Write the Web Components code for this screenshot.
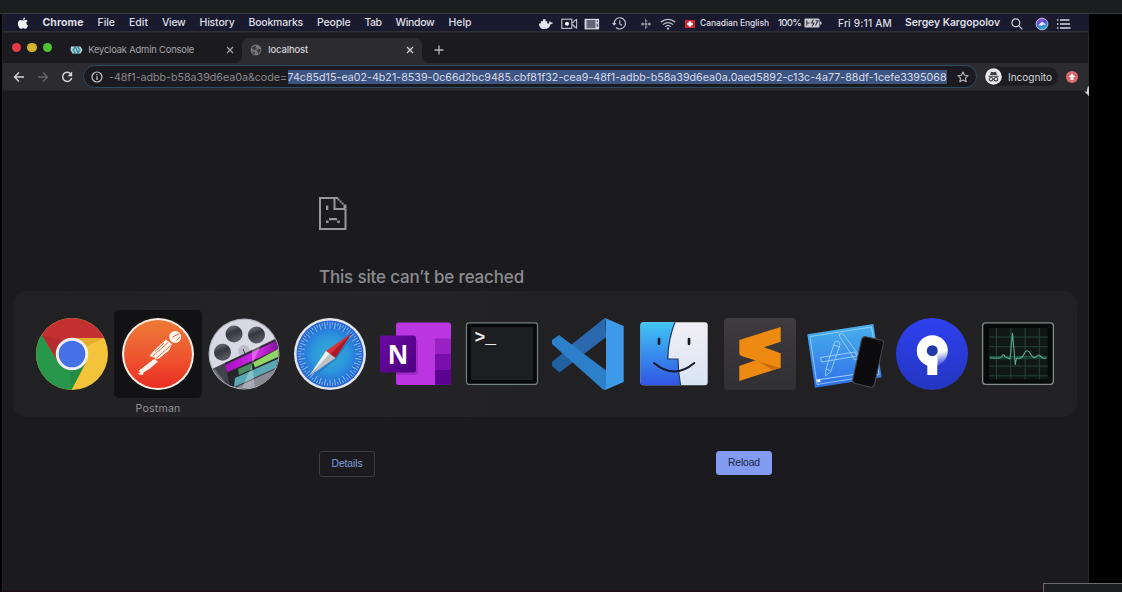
<!DOCTYPE html>
<html lang="en">
<head>
<meta charset="utf-8">
<title>localhost</title>
<style>
html,body{margin:0;height:100%;background:#000;overflow:hidden}
body{font-family:Inter,"Liberation Sans",sans-serif}
</style>
</head>
<body>
<desk-top></desk-top>
<script>
const define=(name,html,ready)=>{
  const t=document.createElement('template');t.innerHTML=html;
  customElements.define(name,class extends HTMLElement{
    connectedCallback(){
      if(this.shadowRoot)return;
      this.attachShadow({mode:'open'}).append(t.content.cloneNode(true));
      if(ready)ready(this,this.shadowRoot);
    }
  });
};

/* A one-line label; "w" is the advance width that its tracking is set to fill. */
define('ui-label',`<style>
:host{display:inline-block;white-space:nowrap;flex:none;line-height:1.2}
</style><span><slot></slot></span>`,(el,root)=>{
  const w=+el.getAttribute('w'),s=root.querySelector('span');
  if(!w)return;
  const n=el.textContent.length,nat=s.getBoundingClientRect().width;
  s.style.letterSpacing=((w-nat)/n)+'px';
  el.style.width=w+'px';
});

const glyphs={
apple:['0 0 12 13','<path fill="#f2f2f5" d="M8.2.4c.1 1.2-1 2.5-2.2 2.5C5.800 1.700 7 .5 8.200.4zM6.200 3.500c.5 0 1.200-.6 2.300-.6.9 0 1.700.4 2.200 1.100-1.900 1.200-1.600 3.700.4 4.500-.5 1.400-1.500 3.200-2.700 3.200-.9 0-1.100-.5-2.200-.5s-1.400.5-2.200.5C2.500 11.700.9 8.900.9 6.700c0-2.300 1.400-3.600 2.900-3.600 1.100 0 1.800.4 2.400.4z"/>'],
docker:['0 0 14 12','<path fill="#e4e4ea" d="M0 5.500h9.500c.7 0 1-.5.6-1.600l.8-.9 1 1.400 1.900.1-.4 1.200-1.800.5C10.700 9.500 8.500 11 5.200 11 2 11 0 9 0 5.500zM1.800 3.200h6.400v2.500H1.800zM4 1.200h2.600v2.200H4z"/>'],
cam:['0 0 17 12','<g fill="none" stroke="#c3c3cb" stroke-width="1.1"><rect x=".8" y="1.200" width="10" height="9.200"/><path d="M11 5l2-1.200V3l2.600-1.500v8.600L13 8.600v-.9L11 6.600"/></g><circle cx="6" cy="5.800" r="2" fill="#fff"/>'],
screen:['0 0 16 12','<rect x=".6" y=".8" width="14.500" height="10.600" fill="#d8d8df"/><rect x="2.500" y="2" width="9" height="8.200" fill="#62657b"/><path stroke="#33344a" d="M13.300 2.500v1.500M13.300 5.500v3.500"/>'],
clock:['0 0 15 13','<g fill="none" stroke="#c0c0c8" stroke-width="1.200"><path d="M2.200 6.500A5.600 5.600 0 1 1 4 10.500M7.800 3.300v3.600l2.300 1.300"/></g><path fill="#c8c8d0" d="M0 6h4.400L2.200 8.800z"/>'],
dots:['0 0 10 12','<path d="M4.500 1v10" stroke="#5c5c6a"/><g fill="#9494a0"><path d="M4 1l3 2.500H4zM4 11l3-2.500H4z"/><circle cx="1.700" cy="6" r="1.500"/><circle cx="5" cy="6" r="1.500"/><circle cx="8.300" cy="6" r="1.500"/></g>'],
wifi:['0 0 16 12','<g fill="none" stroke="#bcbcc6" stroke-width="1.300"><path d="M.8 4.300a10.400 10.400 0 0 1 14.400 0M3 6.600a7.200 7.200 0 0 1 10 0M5.200 8.700a4.100 4.100 0 0 1 5.600 0"/></g><circle cx="8" cy="10.600" r="1.100" fill="#d6d6dc"/>'],
flag:['0 0 10 8','<path fill="#d81f2a" d="M0 0h10v8H0z"/><path fill="#fff" d="M3.800 1.200h2.400v1.600h1.600v2.400H6.200v1.600H3.800V5.200H2.200V2.800h1.600z"/>'],
battery:['0 0 18 10','<rect x=".5" y=".5" width="15" height="9" rx="1" fill="#c9c9d0"/><path fill="#c9c9d0" d="M16 3.200q1.700.4 1.700 1.800T16 6.800z"/><path fill="none" stroke="#34344a" stroke-width="1.100" d="M2.800 2.500v5M2.800 5h2.700M9.500 1.500L7.500 5h2.500L8 8.500M11.500 2.700H14L11.500 7.500"/>'],
search:['0 0 12 12','<g fill="none" stroke="#d3d3da" stroke-width="1.200"><circle cx="4.800" cy="4.800" r="3.900"/><path d="M7.700 7.700L11.300 11.300"/></g>'],
siri:['0 0 14 14','<defs><linearGradient id="a" x2=".3" y2="1"><stop stop-color="#d34ee0"/><stop offset=".5" stop-color="#4a51d8"/><stop offset="1" stop-color="#28b7c7"/></linearGradient></defs><circle cx="7" cy="7" r="5.900" fill="url(#a)" stroke="#b8b5d0" stroke-width="1"/><path d="M3 8.500Q5 6 7 4.800 9.500 5.500 11 8q-3-1-4 .7-2-.8-4-.2z" fill="#e5e3ff"/>'],
list:['0 0 14 10','<path stroke="#d8d8df" stroke-width="1.400" d="M0 1h1.500M3 1h9.500M0 5h1.500M3 5h10M0 9h1.500M3 9h10.500"/>'],
keycloak:['0 0 13 12','<path fill="#c9ced2" d="M1 2.500h9.500L12.500 6l-2 3.500H2.500L.5 6z"/><path fill="none" stroke="#2a9fbd" stroke-width="1.700" d="M5.500 2.500L3.200 6l2.300 3.500M7.500 2.500L9.800 6 7.500 9.500"/><path stroke="#1c677d" d="M6 3.500L7.500 8.500"/>'],
globe:['0 0 12 12','<circle cx="6" cy="6" r="5.400" fill="#77777b"/><path fill="#3c3c40" d="M2 3.500q2-2 4.500-1.800L5.500 3.500 6.800 4.500 4.500 6.200 3 5.500zM7 5.500l3.500-.5q.5 2.500-1.200 4L8 10 7.700 7.500 6.200 7zM2 7.500l2.500.5.5 2.400Q3 10 2 7.500z"/>'],
close:['0 0 8 8','<path stroke="currentColor" stroke-width="1.200" d="M1 1l6 6M7 1L1 7"/>'],
plus:['0 0 10 10','<path stroke="#b4b4b8" stroke-width="1.300" d="M5 .5v9M.5 5h9"/>'],
back:['0 0 12 12','<path fill="none" stroke="currentColor" stroke-width="1.400" d="M11 6H1.600M6 1.500L1.500 6 6 10.500"/>'],
fwd:['0 0 12 12','<path fill="none" stroke="currentColor" stroke-width="1.400" d="M1 6h9.400M6 1.500L10.500 6 6 10.500"/>'],
reload:['0 0 12 12','<path fill="none" stroke="#d5d5d9" stroke-width="1.500" d="M10 3.200A4.600 4.600 0 1 0 10.700 7"/><path fill="#d5d5d9" d="M11.200.6v4.700H6.500z"/>'],
info:['0 0 12 12','<circle cx="6" cy="6" r="5" fill="none" stroke="#c8c8cc" stroke-width="1.200"/><path stroke="#c8c8cc" stroke-width="1.300" d="M6 5.300V9M6 3v1.300"/>'],
star:['0 0 12 12','<path fill="none" stroke="#b9b9bd" stroke-width="1.100" stroke-linejoin="round" d="M6 1l1.500 3.300 3.600.4-2.700 2.400.8 3.600L6 8.900l-3.200 1.800.8-3.600L.9 4.700l3.600-.4z"/>'],
incog:['0 0 17 17','<circle cx="8.500" cy="8.500" r="8.300" fill="#e9e9ed"/><path fill="#3c3c40" d="M6 3.700l2.500.5 2.500-.5 1 3.300H5zM3.300 7.700h10.400v1H3.300z"/><g fill="none" stroke="#3c3c40" stroke-width="1.100"><circle cx="6" cy="11.200" r="1.700"/><circle cx="11" cy="11.200" r="1.700"/><path d="M7.700 11h1.600"/></g>'],
update:['0 0 12 12','<circle cx="6" cy="6" r="6" fill="#dc6a6c"/><path fill="#fff" d="M6 2.700L9.300 6H7.500v3h-3V6H2.700z"/>'],
sad:['0 0 28 33','<g fill="none" stroke="#98989c" stroke-width="2"><path d="M19 1H1v31H26.500V11.500M15.500 1v11h10.500"/></g><path fill="#98989c" d="M18.500 1.500h2v2h-2zM20.500 3.500h2v2h-2zM22.500 5.500h2v2h-2zM24.500 7.500h3v4h-3zM7 8.500h2.300v4.600H7zM10 21h8v2.200h-8zM7 23.500h2.600V26H7zM18.200 23.500h2.600V26h-2.600z"/>']
};
define('ui-glyph',`<style>:host{display:block;flex:none}svg{display:block;width:100%;height:100%}</style>`,(el,root)=>{
  const [vb,body]=glyphs[el.getAttribute('name')];
  const [, ,w,h]=vb.split(' ');
  el.style.width=w+'px';el.style.height=h+'px';
  root.innerHTML+=`<svg viewBox="${vb}">${body}</svg>`;
});

let ticks='';
for(let i=0;i<72;i++)ticks+=`<path transform="rotate(${i*5})" d="M0-32V${i%2?-29:-25.5}"/>`;
let grid='';
for(let x=-21.500;x<29;x+=14.300)grid+=`<path d="M${x}-26V25.300"/>`;
for(let y=-17;y<25;y+=9.700)grid+=`<path d="M-29 ${y}H29.700"/>`;
const apps={
chrome:`<defs><clipPath id="c"><circle r="36"/></clipPath></defs>
<g clip-path="url(#c)"><path fill="#f3c33a" d="M-36-36h72v72h-72z"/><path fill="#27974b" d="M-36-24l7 6L-14 8 14 8.500-1 37h-36z"/><path fill="#c43133" d="M-30-18.500L-36-40H40V-16H0L-14 8z"/><path d="M-29.500-18.500L-14 8-8-14z" fill="#8f2226" opacity=".3"/><path d="M0-16H33L14-8z" fill="#d99a20" opacity=".5"/><path d="M14 8L-1 36-2 16z" fill="#176c35" opacity=".25"/></g>
<circle r="16.200" fill="#f1f1f6"/><circle r="13.300" fill="#4570e6"/>`,
postman:`<defs><linearGradient id="g" x2="0" y2="1"><stop stop-color="#ee7a35"/><stop offset=".55" stop-color="#ee5530"/><stop offset="1" stop-color="#ea2c22"/></linearGradient></defs><circle r="36" fill="#fbeee8"/><circle r="34" fill="url(#g)"/>
<circle cx="17.200" cy="-17" r="6" fill="#fff5ee"/><path d="M14.500-17l7-3.500M18.500-13.500l3.500-4" stroke="#e0643a" stroke-width="1" fill="none"/>
<path fill="#fff5ee" d="M8-14.500l6 4.500L11-3.500 1 4.500-2.500 5.500-3.500 3.500-8.500 2-3.500-4z"/><path fill="#fff5ee" d="M-4 5L0 7.500-8 14.500-14.500 18.500-15 21-20.500 20-17.500 18.500-19.500 17z"/><path stroke="#ea6136" stroke-width=".9" fill="none" d="M10-11.500L-5 2M12.500-8.500L-2 4.500M6-11l-9 8.500"/>`,
reel:`<defs><clipPath id="c"><circle r="34.500"/></clipPath><linearGradient id="h" x2=".4" y2="1"><stop stop-color="#7d7d88"/><stop offset=".5" stop-color="#36363e"/><stop offset="1" stop-color="#5a5a66"/></linearGradient><linearGradient id="p"><stop stop-color="#a50fbf"/><stop offset=".6" stop-color="#d32be8"/><stop offset="1" stop-color="#7a1290"/></linearGradient></defs>
<circle r="35.500" fill="#b2b2bc"/><g clip-path="url(#c)"><circle r="34.500" fill="#d9d9e6"/><circle cx="-10" cy="-20" r="8.500" fill="url(#h)"/><circle cx="12.500" cy="-19" r="8.500" fill="url(#h)"/><circle cx="-21.500" cy="-1.700" r="8.500" fill="url(#h)"/><circle cx="0" cy="-3" r="6" fill="#bdbdc8"/><path d="M-1-5l2 5" stroke="#444"/>
<path fill="#42424a" d="M-36 17L36-17.500V36H-36z"/><path fill="#b9b9c4" d="M-36 19L-29 15-13 36H-36z" opacity=".35"/><path fill="#26262c" d="M-19 9L36-16v28L-14 34z"/><path fill="url(#p)" d="M-19 11L36-15v9L-17 18.500z"/><path fill="#4b8a63" d="M-6 15L8 9v6L-5 21z"/><path fill="#91d468" d="M9 8.500L36-6v8L11 13.500z"/><path fill="#5aa8b6" d="M-9 24L36 4v8L-10 33z"/><path fill="#8b8b98" d="M-7 33L36 13v25H-7z"/><path fill="#fff" opacity=".28" d="M8-6L18-11 8 11 11 34-2 34 8 11z"/></g>`,
safari:`<defs><radialGradient id="g"><stop stop-color="#35b2cf"/><stop offset=".55" stop-color="#2c93dd"/><stop offset="1" stop-color="#2463d4"/></radialGradient></defs><circle r="36" fill="#e4e5eb"/><circle r="33.500" fill="url(#g)"/><g stroke="#b9dcf3" stroke-width=".8" opacity=".8">${ticks}</g>
<path fill="#1a4f9a" opacity=".35" d="M22-17L6 6-18 24z"/><path fill="#e22c36" d="M22-21L-4-3 0 0z"/><path fill="#b01824" d="M22-21L0 0 5.500 4z"/><path fill="#f2eff0" d="M-4-3L-21 22 0 0z"/><path fill="#c4bfc4" d="M5.500 4L-21 22 0 0z"/>`,
onenote:`<defs><linearGradient id="g" x2="1" y2="1"><stop stop-color="#6a0aa0"/><stop offset="1" stop-color="#4c0182"/></linearGradient><clipPath id="c"><rect x="-20" y="-31.500" width="55" height="62.500" rx="2.500"/></clipPath></defs>
<g clip-path="url(#c)"><path fill="#b936e0" d="M-20-32h55v64h-55z"/><path fill="#9a22c4" d="M19-15.500h17V0H19z"/><path fill="#7a0eaa" d="M19 0h17v16H19z"/><path fill="#5c0290" d="M19 16h17v16H19z"/><rect x="-22" y="-15" width="24" height="36" rx="3" fill="#6a1190" opacity=".3"/></g><rect x="-36" y="-18.500" width="36" height="37" rx="2.500" fill="url(#g)"/><text x="-18" y="9.500" text-anchor="middle" font-family="Open Sans" font-weight="700" font-size="27" textLength="20.500" lengthAdjust="spacingAndGlyphs" fill="#fff">N</text>`,
terminal:`<rect x="-35.500" y="-31.200" width="71" height="61.500" rx="2.500" fill="#070808" stroke="#768082" stroke-width="1.200"/><rect x="-31" y="-27" width="62" height="53" fill="#1d1e1f"/><text x="-27.500" y="-11.500" font-family="Liberation Mono" font-weight="700" font-size="18" fill="#e8e8e8">&gt;_</text>`,
vscode:`<path fill="#2360a0" d="M17-36L18-17-28.500 18.500-36 12V8z"/><path fill="#2b69ac" d="M17-36L18-17-15 8-26-2z"/><path fill="#2c80ca" d="M-29-19L-36-14v4L15 35.500 18 36V16.500z"/><path fill="#3d9ae8" d="M17-36L35.700-28V28L17 36 18 32V-32z"/>`,
finder:`<defs><linearGradient id="g" x2="0" y2="1"><stop stop-color="#40c6f4"/><stop offset="1" stop-color="#3154e3"/></linearGradient><linearGradient id="w" x2="0" y2="1"><stop stop-color="#f2eff5"/><stop offset="1" stop-color="#d8e4f3"/></linearGradient><clipPath id="c"><rect x="-33.500" y="-31.700" width="67.200" height="63" rx="3"/></clipPath></defs><g clip-path="url(#c)"><path fill="url(#w)" d="M-34-32h68v64h-68z"/><path fill="url(#g)" d="M-34-32H1Q-6-14-6.200 5H4Q4 18 6.700 32H-34z"/><path fill="none" stroke="#1d3a66" stroke-width="1.200" d="M1-32Q-6-14-6.200 5H4Q4 18 6.700 32"/></g><g fill="none" stroke="#141a28" stroke-linecap="round"><path stroke-width="2.700" d="M-15-15v4.800M15-15v4.800"/><path stroke-width="2" d="M-20 9Q0 26 20.300 9"/></g>`,
sublime:`<defs><linearGradient id="g" x2="0" y2="1"><stop stop-color="#3e3b3f"/><stop offset="1" stop-color="#302f31"/></linearGradient></defs><rect x="-36" y="-36" width="72" height="72" rx="3.500" fill="url(#g)"/><path fill="#ee8a12" d="M-20.700 12L2 4 20.700 13.800-20.700 27z"/><path fill="#ca6c0a" d="M-4 6L20.700 14 12 16z"/><path fill="#ee8a12" d="M20.700-27L-20.700-14V-1Q-20.700 1.500-18 2.300L20.700 14V-.7L4-6.700 20.700-12.300z"/>`,
xcode:`<defs><linearGradient id="g" x2="0" y2="1"><stop stop-color="#48b0ec"/><stop offset="1" stop-color="#2f70ea"/></linearGradient></defs><path fill="url(#g)" d="M-38.700-19.700L27.300-30 35.700 23.300-31 33.700z"/><g fill="none" stroke="#a4d5f8"><path opacity=".8" d="M-36-17.500L25.500-27 33 20.500-29 30.500z"/><path d="M-30 26L8 20.500"/><path opacity=".85" d="M-25.500 3.500L9-2 11 2-24.500 8zM-7-19.500q3-2.500 5 .5L14 3 9 6-6-17zM-12-10L-20 15-20.500 22-15.500 18-6-9q0-4-3-4t-3 3zM-12-9l6 2M-20 15l4 1.500"/></g>
<path fill="#fff" d="M-29 26l3-1 .5 3-3 .5z"/><path d="M20-17.200L35-14Q38-13 37.300-10L28.500 30.500Q27.500 34 24.500 33.300L9.500 29.500Q6 28.500 6.800 25L15.500-14Q16.800-18 20-17.200z" fill="#0b0b0d" stroke="#46484f" stroke-width="1.100"/>`,
sourcetree:`<defs><linearGradient id="g" x2="0" y2="1"><stop stop-color="#2f40f0"/><stop offset="1" stop-color="#2336c0"/></linearGradient><linearGradient id="f" x1=".7" y1=".1" x2=".8" y2=".8"><stop stop-color="#2a3ad8" stop-opacity="0"/><stop offset="1" stop-color="#2a3ad8" stop-opacity=".85"/></linearGradient></defs><circle r="36" fill="url(#g)"/><circle cx=".3" cy="-3.300" r="15.500" fill="#fff"/><path fill="url(#f)" d="M5.300-5H16Q17 9 5.300 12.500z"/><path fill="#fff" d="M-4.700 5H5.300V21H-4.700z"/><circle cx=".3" cy="-3.300" r="5.500" fill="#2339a5"/>`,
activity:`<rect x="-35.400" y="-31.200" width="70.800" height="61.500" rx="3" fill="#080a0a" stroke="#858c8c" stroke-width="1.300"/><rect x="-29" y="-26" width="58.700" height="51.300" fill="#101815"/><g stroke="#29453c" stroke-width=".9">${grid}</g><path d="M-29 3.700H29" stroke="#1d7a5c" stroke-width="3" opacity=".4"/><path fill="none" stroke="#5aa98b" stroke-width="1.100" d="M-28 4H-18Q-16 3.500-15.500 1-14 0-13 3-10 4-8 5L-5.500-21-2.700 11Q-2 3 0 4 4 5 6 0 9-6 12-1 15 5 18 3 21-1 23 3 26 5 28 4"/>`
};
define('app-icon',`<style>
:host{display:flex;width:86px;height:126px;flex:none;justify-content:center;align-items:center;position:relative}
:host([selected])::before{content:"";position:absolute;left:-1px;top:19px;width:88px;height:88px;border-radius:5px;background:#121214}
svg{position:relative;display:block;width:80px;height:80px;overflow:visible}
.n{position:absolute;top:111px;left:0;width:86px;text-align:center;font-size:10.600px;letter-spacing:.2px;color:#929295}
</style><div class="i"></div><div class="n"><slot></slot></div>`,(el,root)=>{
  root.querySelector('.i').innerHTML=`<svg viewBox="-40 -40 80 80">${apps[el.getAttribute('name')]}</svg>`;
});

define('menu-bar',`<style>
:host{display:flex;align-items:center;height:15px;background:#1a1a2e;border-bottom:1px solid #303038;color:#dedee4;font-size:10.500px;font-weight:500;padding:2px 18px 0 14px;box-sizing:content-box}
nav{display:flex;gap:14px;margin-left:13.500px;align-items:center}
.b{font-weight:700}
.r{display:flex;align-items:center;margin-left:auto}
</style>
<ui-glyph name="apple"></ui-glyph>
<nav><ui-label class="b" w="41">Chrome</ui-label><ui-label w="17.500">File</ui-label><ui-label w="19">Edit</ui-label><ui-label w="23.500">View</ui-label><ui-label w="35">History</ui-label><ui-label w="54.500">Bookmarks</ui-label><ui-label w="33.500">People</ui-label><ui-label w="17">Tab</ui-label><ui-label w="39">Window</ui-label><ui-label w="23">Help</ui-label></nav>
<div class="r"><ui-glyph name="docker"></ui-glyph><ui-glyph name="cam" style="margin-left:8px"></ui-glyph><ui-glyph name="screen" style="margin-left:6px"></ui-glyph><ui-glyph name="clock" style="margin-left:12px"></ui-glyph><ui-glyph name="dots" style="margin-left:14px"></ui-glyph><ui-glyph name="wifi" style="margin-left:9px"></ui-glyph><ui-glyph name="flag" style="margin-left:9px"></ui-glyph><ui-label w="69" style="margin-left:5px;font-size:8.500px">Canadian English</ui-label><ui-label w="23" style="margin-left:9px;font-size:9.600px;margin-top:-1px">100%</ui-label><ui-glyph name="battery" style="margin-left:3px;margin-top:-1px"></ui-glyph><ui-label w="54" style="margin-left:16px;font-size:10.100px">Fri 9:11 AM</ui-label><ui-label w="95" style="margin-left:13px;font-size:10.400px;font-weight:600">Sergey Kargopolov</ui-label><ui-glyph name="search" style="margin-left:11px"></ui-glyph><ui-glyph name="siri" style="margin-left:12px"></ui-glyph><ui-glyph name="list" style="margin-left:8px"></ui-glyph></div>`);

define('tab-strip',`<style>
:host{display:flex;height:30px;background:#1b1b1f;box-sizing:border-box;padding:5px 0 0 9px;align-items:stretch}
.l{display:flex;gap:6px;align-items:center;height:19px;margin-right:18px}
.l i{width:9.400px;height:9.400px;border-radius:50%}
.t{display:flex;align-items:center;height:24px;box-sizing:border-box;font-size:9.400px}
.t.b{height:25px;padding-bottom:1px}
.a{color:#a5a5a9;width:172px}
.b{color:#d6d6da;width:180px;background:#2b2b30;border-radius:6px 6px 0 0;padding-left:8px;font-weight:500;position:relative}
.b::before,.b::after{content:"";position:absolute;bottom:0;width:6px;height:6px;background:radial-gradient(circle at 0 0,transparent 5.500px,#2b2b30 6px)}
.b::before{left:-6px}.b::after{right:-6px;background:radial-gradient(circle at 100% 0,transparent 5.500px,#2b2b30 6px)}
.p{margin:7px 0 0 12px}
</style>
<div class="l"><i style="background:#e23b45"></i><i style="background:#d6b32f"></i><i style="background:#4fc431"></i></div>
<div class="t a"><ui-glyph name="keycloak"></ui-glyph><ui-label w="106" style="margin-left:5px">Keycloak Admin Console</ui-label><ui-glyph name="close" style="margin-left:32px"></ui-glyph></div>
<div class="t b"><ui-glyph name="globe"></ui-glyph><ui-label w="40" style="margin-left:6px">localhost</ui-label><ui-glyph name="close" style="margin-left:98px"></ui-glyph></div>
<ui-glyph class="p" name="plus"></ui-glyph>`);

define('tool-bar',`<style>
:host{display:flex;align-items:center;height:28px;box-sizing:border-box;background:#2b2b30;border-bottom:1px solid #232328;padding-left:10px;color:#d5d5d9}
.o{display:flex;align-items:center;width:894px;height:23px;box-sizing:border-box;border:1.500px solid #2c4b64;border-radius:12px;background:#1b1b1f;margin-left:10px;padding-left:7px;font-size:10.700px;flex:none}
.u{color:#88888d;margin-left:6px;height:14px;line-height:15px}
.s{background:#3d5380;color:#d5dcec;height:14px;line-height:15px;margin-left:.500px}
.i{display:flex;align-items:center;height:19px;width:73px;background:#1d1d21;border-radius:10px;margin-left:8px;font-size:10px;color:#d6d6da;flex:none}
</style>
<ui-glyph name="back"></ui-glyph><ui-glyph name="fwd" style="margin-left:12px;color:#65656a"></ui-glyph><ui-glyph name="reload" style="margin-left:12px"></ui-glyph>
<div class="o"><ui-glyph name="info"></ui-glyph><ui-label class="u" w="178">-48f1-adbb-b58a39d6ea0a&amp;code=</ui-label><ui-label class="s" w="659">74c85d15-ea02-4b21-8539-0c66d2bc9485.cbf81f32-cea9-48f1-adbb-b58a39d6ea0a.0aed5892-c13c-4a77-88df-1cefe3395068</ui-label><ui-glyph name="star" style="margin-left:10px"></ui-glyph></div>
<div class="i"><ui-glyph name="incog"></ui-glyph><ui-label w="44" style="margin-left:6px">Incognito</ui-label></div>
<ui-glyph name="update" style="margin-left:8px"></ui-glyph>`);

define('error-page',`<style>
:host{display:block;width:453px;padding:106px 0 0 316px}
h1{margin:37px 0 0;font-size:17px;font-weight:500;color:#8c8c90;line-height:21px;height:21px}
.b{display:flex;justify-content:space-between;align-items:flex-start;margin-top:163px}
button{font:400 10.400px "Liberation Sans",sans-serif;width:56px;height:25.500px;border-radius:3px;background:none;border:1px solid #3c3c40;color:#7f9bdc;padding:0}
.r{background:#829cf2;border-color:#829cf2;color:#1d2540;height:24px}
</style>
<ui-glyph name="sad"></ui-glyph>
<h1><ui-label w="205">This site can’t be reached</ui-label></h1>
<div class="b"><button><ui-label w="31">Details</ui-label></button><button class="r"><ui-label w="32">Reload</ui-label></button></div>`);

define('app-switcher',`<style>
:host{display:flex;box-sizing:border-box;width:1064px;height:126px;padding-left:16px;border-radius:14px;background:linear-gradient(90deg,#212123,#242427 35%,#212123 55%,#212123)}
</style>${Object.keys(apps).map(n=>n=='postman'?'<app-icon name="postman" selected>Postman</app-icon>':`<app-icon name="${n}"></app-icon>`).join('')}`);

define('desk-top',`<style>
:host{display:flex;flex-direction:column;width:1122px;height:592px;position:relative;overflow:hidden;background:#000}
.top{height:13px;background:#1b1d1e;border-bottom:1px solid #393a3c;flex:none}
.scr{flex:1;width:1087px;margin-left:2px;box-sizing:border-box;border-left:1px solid #222226;background:#1b1b1f;display:flex;flex-direction:column;border-bottom:2px solid #1c1018}
.win{flex:1;border-top:1px solid #252529;border-right:1px solid #29292d;border-radius:0 4px 0 0}
app-switcher{position:absolute;left:13px;top:291px}
.c{position:absolute;left:1043px;top:583px;width:79px;height:9px;box-sizing:border-box;border:1px solid #68696c;border-width:1px 0 0 1px;background:#1b1d1e}
.m{position:absolute;left:1084px;top:86px;width:5px;height:10px}
</style>
<div class="top"></div>
<div class="scr"><menu-bar></menu-bar><div class="win"><tab-strip></tab-strip><tool-bar></tool-bar><error-page></error-page></div></div>
<app-switcher></app-switcher>
<svg class="m" viewBox="0 0 5 10"><path fill="#d2d2d6" d="M4 0l1 1v9L0 5l2.500 1z"/></svg>
<div class="c"></div>`);
</script>
</body>
</html>
